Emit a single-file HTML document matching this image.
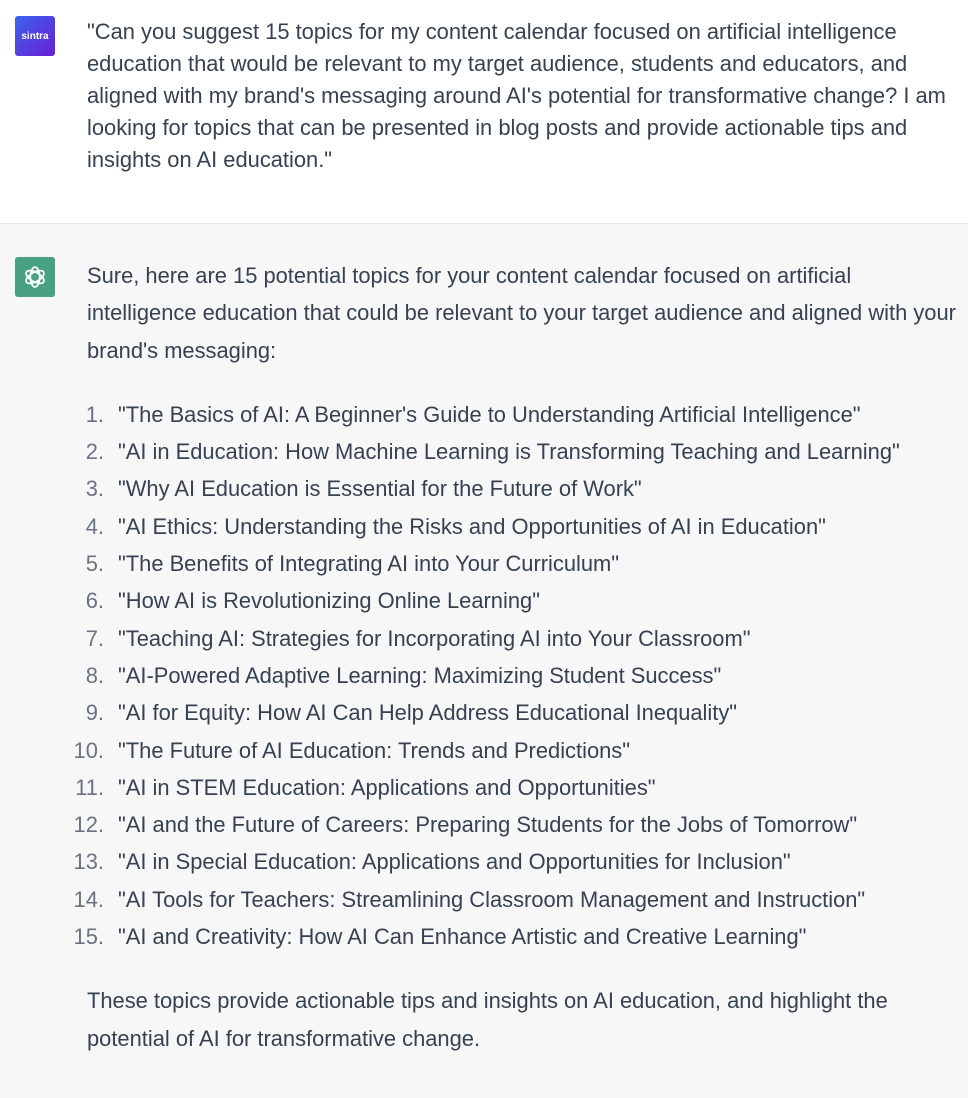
<!DOCTYPE html>
<html><head><meta charset="utf-8"><style>
body{margin:0;width:968px;height:1098px;overflow:hidden;font-family:"Liberation Sans",sans-serif;color:#374151;background:#fff}
.row{position:relative}
.u{height:224px;border-bottom:1px solid #e5e5e5;box-sizing:border-box}
.a{height:874px;background:#f7f7f8}
.av{position:absolute;left:15px;width:40px;height:40px;border-radius:3px}
.t{position:absolute;left:87px;width:875px;font-size:21.9px}
.u .t{top:16px;line-height:32px}
.a .t{top:33px;line-height:37.3px}
p{margin:0}
ol{margin:27px 0 27px 0;padding-left:31px;list-style:none;counter-reset:n}
li{position:relative;counter-increment:n}
li::before{content:counter(n) ".";position:absolute;right:calc(100% + 14px);color:#6b7280}
</style></head><body>
<div class="row u">
<div class="av" style="top:16px;background:linear-gradient(135deg,#3b63ee,#6a1fd2);color:#fff;font-weight:bold;font-size:10px;display:flex;align-items:center;justify-content:center">sintra</div>
<div class="t">"Can you suggest 15 topics for my content calendar focused on artificial intelligence education that would be relevant to my target audience, students and educators, and aligned with my brand's messaging around AI's potential for transformative change? I am looking for topics that can be presented in blog posts and provide actionable tips and insights on AI education."</div>
</div>
<div class="row a">
<div class="av" style="top:33px;background:#4aa181;display:flex;align-items:center;justify-content:center">
<svg width="28" height="28" viewBox="0 0 24 24" fill="none" stroke="#fff" stroke-width="1.5"><g transform="translate(12 12)"><ellipse rx="4" ry="8.5" /><ellipse rx="4" ry="8.5" transform="rotate(60)"/><ellipse rx="4" ry="8.5" transform="rotate(120)"/></g></svg></div>
<div class="t">
<p>Sure, here are 15 potential topics for your content calendar focused on artificial intelligence education that could be relevant to your target audience and aligned with your brand's messaging:</p>
<ol>
<li>"The Basics of AI: A Beginner's Guide to Understanding Artificial Intelligence"</li>
<li>"AI in Education: How Machine Learning is Transforming Teaching and Learning"</li>
<li>"Why AI Education is Essential for the Future of Work"</li>
<li>"AI Ethics: Understanding the Risks and Opportunities of AI in Education"</li>
<li>"The Benefits of Integrating AI into Your Curriculum"</li>
<li>"How AI is Revolutionizing Online Learning"</li>
<li>"Teaching AI: Strategies for Incorporating AI into Your Classroom"</li>
<li>"AI-Powered Adaptive Learning: Maximizing Student Success"</li>
<li>"AI for Equity: How AI Can Help Address Educational Inequality"</li>
<li>"The Future of AI Education: Trends and Predictions"</li>
<li>"AI in STEM Education: Applications and Opportunities"</li>
<li>"AI and the Future of Careers: Preparing Students for the Jobs of Tomorrow"</li>
<li>"AI in Special Education: Applications and Opportunities for Inclusion"</li>
<li>"AI Tools for Teachers: Streamlining Classroom Management and Instruction"</li>
<li>"AI and Creativity: How AI Can Enhance Artistic and Creative Learning"</li>
</ol>
<p>These topics provide actionable tips and insights on AI education, and highlight the potential of AI for transformative change.</p>
</div>
</div>
</body></html>
